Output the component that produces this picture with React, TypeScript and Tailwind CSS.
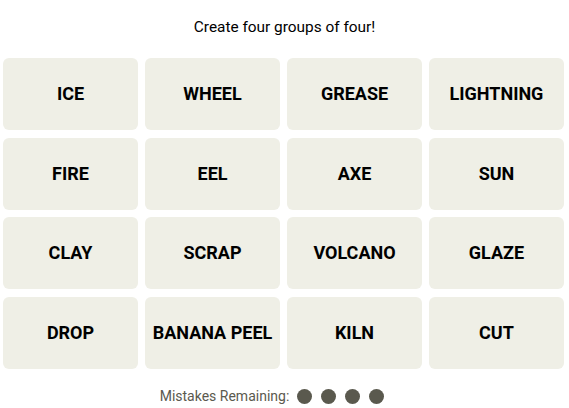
import React from 'react';

const words = [
  'ICE', 'WHEEL', 'GREASE', 'LIGHTNING',
  'FIRE', 'EEL', 'AXE', 'SUN',
  'CLAY', 'SCRAP', 'VOLCANO', 'GLAZE',
  'DROP', 'BANANA PEEL', 'KILN', 'CUT',
];

export default function App() {
  return (
    <div className="w-[569px] h-[408px] bg-white overflow-hidden font-['Roboto',sans-serif] text-black">
      <p className="pt-[17px] h-[58px] text-center text-[15.4px] leading-[20px]">Create four groups of four!</p>
      <div className="ml-[3px] grid grid-cols-[repeat(4,135px)] gap-x-[7px] gap-y-[7.5px]">
        {words.map((w) => (
          <div
            key={w}
            className="h-[72px] pb-[1px] rounded-md bg-[#efefe6] flex items-center justify-center font-bold text-[18px]"
          >
            {w}
          </div>
        ))}
      </div>
      <div className="mt-[17px] pr-[25px] flex items-center justify-center gap-[9px] text-[14px] text-[#5a594e]">
        <span className="mr-[-1px]">Mistakes Remaining:</span>
        {[0, 1, 2, 3].map((i) => (
          <span key={i} className="w-[15px] h-[15px] rounded-full bg-[#5a594e]" />
        ))}
      </div>
    </div>
  );
}
